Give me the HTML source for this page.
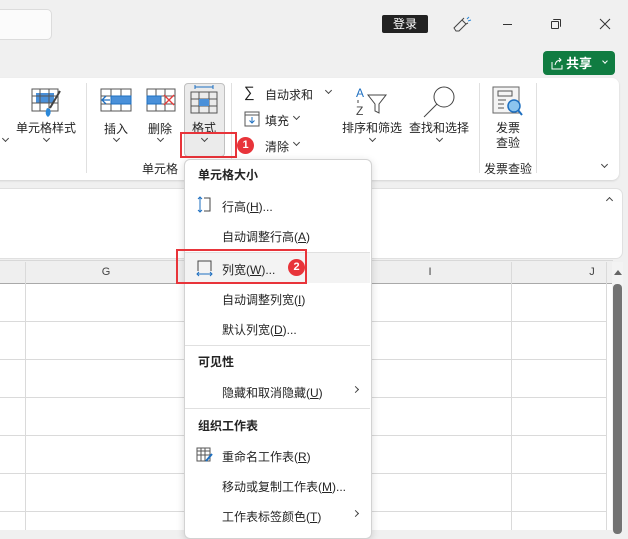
<!DOCTYPE html>
<html><head><meta charset="utf-8"><style>
*{margin:0;padding:0;box-sizing:border-box}
body{width:628px;height:530px;overflow:hidden;background:#f0f0f0;font-family:"Liberation Sans","Noto Sans CJK SC",sans-serif;font-size:12px;color:#242424;position:relative}
.a{position:absolute}
.t{position:absolute;white-space:nowrap}
.c{transform:translateX(-50%)}
.chev{position:absolute;width:5px;height:5px;border-right:1px solid #444;border-bottom:1px solid #444;transform:rotate(45deg)}
.vs{position:absolute;width:1px;background:#e0e0e0}
.mi{position:absolute;left:222px;white-space:nowrap;font-size:12px;color:#242424}
.mh{position:absolute;left:198px;font-weight:bold;font-size:12px;color:#242424}
.sep{position:absolute;left:185px;width:185px;height:1px;background:#e0e0e0}
u{text-decoration:underline}
</style></head><body>
<!-- search box -->
<div class="a" style="left:-10px;top:9px;width:62px;height:31px;background:#fbfbfb;border:1px solid #dcdcdc;border-radius:5px"></div>
<!-- title controls -->
<div class="a" style="left:382px;top:15px;width:46px;height:18px;background:#222;border-radius:2px;color:#fff;font-size:12px;text-align:center;line-height:18px">登录</div>
<svg class="a" style="left:452px;top:16px" width="22" height="18" viewBox="0 0 22 18"><path d="M4 15 L2 12 L10 4 L14 8 L7 15 Z M10 4 L12 2 M14 8 L16 7" fill="none" stroke="#444" stroke-width="1"/><path d="M15 3 L17 1 M16 5 L19 4" stroke="#2b88d8" stroke-width="1"/></svg>
<div class="a" style="left:503px;top:24px;width:9px;height:1px;background:#333"></div>
<div class="a" style="left:551px;top:21px;width:8px;height:8px;border:1px solid #333;border-radius:1px"></div>
<div class="a" style="left:553px;top:19px;width:8px;height:8px;border-top:1px solid #333;border-right:1px solid #333;border-radius:1px"></div>
<svg class="a" style="left:599px;top:18px" width="12" height="12"><path d="M1 1L11 11M11 1L1 11" stroke="#333" stroke-width="1"/></svg>
<!-- share -->
<div class="a" style="left:543px;top:51px;width:72px;height:24px;background:#107c41;border-radius:4px;color:#fff"></div>
<svg class="a" style="left:550px;top:56px" width="14" height="14"><path d="M2 6 V13 H12 V9 M5 9 Q6 4 11 4 M9 2 L11 4 L9 6" fill="none" stroke="#fff" stroke-width="1"/></svg>
<div class="t" style="left:566px;top:53px;color:#fff;font-size:13px;font-weight:bold">共享</div>
<div class="chev" style="left:603px;top:59px;border-color:#fff;width:4px;height:4px"></div>
<!-- ribbon panel -->
<div class="a" style="left:-8px;top:78px;width:627px;height:102px;background:#fff;border-radius:7px;box-shadow:0 1px 2px rgba(0,0,0,.12)"></div>
<div class="vs" style="left:86px;top:83px;height:90px"></div>
<div class="vs" style="left:231px;top:83px;height:90px"></div>
<div class="vs" style="left:479px;top:83px;height:90px"></div>
<div class="vs" style="left:536px;top:83px;height:90px"></div>
<div class="chev" style="left:3px;top:136px"></div>
<!-- cell style icon -->
<svg class="a" style="left:30px;top:86px" width="34" height="34"><rect x="2" y="3" width="26" height="22" fill="none" stroke="#555"/><rect x="6" y="7" width="18" height="10" fill="#4a90d9"/><path d="M2 10H28M2 17H28M10 3V25M19 3V25" stroke="#555"/><path d="M30 5 L20 22" stroke="#444" stroke-width="2"/><path d="M17 22 Q14 28 18 31 Q22 28 20 23Z" fill="#2b88d8"/></svg>
<div class="t c" style="left:46px;top:119px">单元格样式</div>
<div class="chev" style="left:44px;top:136px"></div>
<!-- insert -->
<svg class="a" style="left:100px;top:88px" width="32" height="24"><rect x="1" y="1" width="30" height="22" fill="none" stroke="#555"/><path d="M1 8H31M1 16H31M11 1V23M21 1V23" stroke="#555"/><rect x="11" y="8" width="20" height="8" fill="#4a90d9" stroke="#1e6fc0"/><path d="M10 12H2 M6 8 L2 12 L6 16" stroke="#1e6fc0" fill="none" stroke-width="1.3"/></svg>
<div class="t c" style="left:116px;top:120px">插入</div>
<div class="chev" style="left:114px;top:136px"></div>
<!-- delete -->
<svg class="a" style="left:146px;top:88px" width="30" height="24"><rect x="1" y="1" width="28" height="22" fill="none" stroke="#555"/><path d="M1 8H29M1 16H29M10 1V23M19 1V23" stroke="#555"/><rect x="1" y="8" width="14" height="8" fill="#4a90d9" stroke="#1e6fc0"/><path d="M18 7L28 17M28 7L18 17" stroke="#e83a3a" stroke-width="1.3"/></svg>
<div class="t c" style="left:160px;top:120px">删除</div>
<div class="chev" style="left:158px;top:136px"></div>
<!-- format button -->
<div class="a" style="left:184px;top:83px;width:41px;height:74px;background:#ebebeb;border:1px solid #c0c0c0;border-radius:4px"></div>
<svg class="a" style="left:189px;top:84px" width="30" height="30"><path d="M6 3H24M6 1V5M24 1V5" stroke="#1e6fc0"/><rect x="2" y="8" width="26" height="21" fill="none" stroke="#555"/><path d="M2 15H28M2 22H28M10 8V29M20 8V29" stroke="#555"/><rect x="10" y="15" width="10" height="7" fill="#4a90d9"/></svg>
<div class="t c" style="left:204px;top:119px">格式</div>
<div class="chev" style="left:202px;top:136px"></div>
<div class="a" style="left:180px;top:132px;width:57px;height:26px;border:2px solid #e8343a"></div>
<div class="a" style="left:237px;top:137px;width:17px;height:17px;border-radius:50%;background:#e8343a;color:#fff;font-size:11px;font-weight:bold;text-align:center;line-height:17px">1</div>
<div class="t c" style="left:160px;top:160px">单元格</div>
<!-- editing -->
<div class="t" style="left:244px;top:84px;font-size:15px">∑</div>
<div class="t" style="left:265px;top:86px">自动求和</div>
<div class="chev" style="left:326px;top:88px"></div>
<svg class="a" style="left:244px;top:111px" width="16" height="16"><rect x="1" y="1" width="14" height="14" fill="none" stroke="#555"/><path d="M1 4H15" stroke="#555"/><path d="M8 6V12M5.5 9.5L8 12L10.5 9.5" stroke="#1e6fc0" fill="none"/></svg>
<div class="t" style="left:265px;top:112px">填充</div>
<div class="chev" style="left:294px;top:114px"></div>
<div class="t" style="left:265px;top:138px">清除</div>
<div class="chev" style="left:294px;top:140px"></div>
<svg class="a" style="left:352px;top:86px" width="40" height="32"><text x="4" y="11" font-size="12" fill="#1e6fc0" font-family="Liberation Sans">A</text><text x="4" y="29" font-size="12" fill="#444" font-family="Liberation Sans">Z</text><path d="M6 14V17" stroke="#444"/><path d="M16 9H34L27 18V27L23 25V18Z" fill="none" stroke="#444"/></svg>
<div class="t c" style="left:372px;top:119px">排序和筛选</div>
<div class="chev" style="left:370px;top:136px"></div>
<svg class="a" style="left:420px;top:84px" width="40" height="36"><circle cx="24" cy="13" r="10" fill="none" stroke="#444"/><path d="M17 20L4 33" stroke="#444"/></svg>
<div class="t c" style="left:439px;top:119px">查找和选择</div>
<div class="chev" style="left:437px;top:136px"></div>
<svg class="a" style="left:492px;top:86px" width="34" height="32"><rect x="1" y="1" width="26" height="26" fill="#f4f4f4" stroke="#666"/><rect x="6" y="5" width="14" height="5" fill="none" stroke="#555"/><path d="M6 14H14M6 18H12M6 22H12" stroke="#555"/><circle cx="22" cy="20" r="6" fill="#8cc4ee" stroke="#1e6fc0" stroke-width="1.5"/><path d="M26 24L30 29" stroke="#1e6fc0" stroke-width="2"/></svg>
<div class="t c" style="left:508px;top:119px">发票</div>
<div class="t c" style="left:508px;top:134px">查验</div>
<div class="t c" style="left:508px;top:160px">发票查验</div>
<div class="chev" style="left:602px;top:162px"></div>
<!-- formula panel -->
<div class="a" style="left:-8px;top:188px;width:631px;height:71px;background:#fff;border-radius:7px;border:1px solid #e0e0e0"></div>
<div class="chev" style="left:607px;top:198px;transform:rotate(225deg)"></div>
<!-- grid -->
<div class="a" style="left:0;top:260px;width:613px;height:24px;background:#efefef;border-top:1px solid #d8d8d8;border-bottom:1px solid #a9a9a9"></div>
<div class="a" style="left:0;top:284px;width:613px;height:246px;background:#fff"></div>
<div class="vs" style="left:25px;top:262px;height:268px;background:#dadada"></div>
<div class="vs" style="left:511px;top:262px;height:268px;background:#dadada"></div>
<div class="vs" style="left:606px;top:262px;height:268px;background:#dadada"></div>
<div class="a" style="left:0;top:321px;width:606px;height:1px;background:#dadada"></div>
<div class="a" style="left:0;top:359px;width:606px;height:1px;background:#dadada"></div>
<div class="a" style="left:0;top:397px;width:606px;height:1px;background:#dadada"></div>
<div class="a" style="left:0;top:435px;width:606px;height:1px;background:#dadada"></div>
<div class="a" style="left:0;top:473px;width:606px;height:1px;background:#dadada"></div>
<div class="a" style="left:0;top:511px;width:606px;height:1px;background:#dadada"></div>
<div class="t c" style="left:106px;top:266px;font-size:11px;color:#444">G</div>
<div class="t c" style="left:430px;top:266px;font-size:11px;color:#444">I</div>
<div class="t c" style="left:592px;top:266px;font-size:11px;color:#444">J</div>
<div class="a" style="left:612px;top:262px;width:11px;height:268px;background:#f3f3f3"></div>
<div class="a" style="left:614px;top:270px;width:0;height:0;border-left:4px solid transparent;border-right:4px solid transparent;border-bottom:5px solid #666"></div>
<div class="a" style="left:613px;top:284px;width:9px;height:250px;background:#737373;border-radius:4px"></div>
<!-- menu -->
<div class="a" style="left:184px;top:159px;width:188px;height:380px;background:#fff;border:1px solid #d2d2d2;border-radius:6px;box-shadow:0 2px 8px rgba(0,0,0,.15)"></div>
<div class="mh" style="top:166px">单元格大小</div>
<svg class="a" style="left:196px;top:196px" width="18" height="18"><path d="M4 1V16M2 3L4 1L6 3M2 14L4 16L6 14" stroke="#1e6fc0" fill="none"/><path d="M8 2H14V15H8" stroke="#444" fill="none"/></svg>
<div class="mi" style="top:198px">行高(<u>H</u>)...</div>
<div class="mi" style="top:228px">自动调整行高(<u>A</u>)</div>
<div class="sep" style="top:252px"></div>
<div class="a" style="left:185px;top:253px;width:185px;height:30px;background:#f3f3f3"></div>
<svg class="a" style="left:196px;top:259px" width="18" height="18"><path d="M2 12V2H15V12" stroke="#444" fill="none"/><path d="M1 15H16M3 13L1 15L3 17M14 13L16 15L14 17" stroke="#1e6fc0" fill="none"/></svg>
<div class="mi" style="top:261px">列宽(<u>W</u>)...</div>
<div class="a" style="left:176px;top:249px;width:131px;height:35px;border:2px solid #e8343a"></div>
<div class="a" style="left:288px;top:259px;width:17px;height:17px;border-radius:50%;background:#e8343a;color:#fff;font-size:11px;font-weight:bold;text-align:center;line-height:17px">2</div>
<div class="mi" style="top:291px">自动调整列宽(<u>I</u>)</div>
<div class="mi" style="top:321px">默认列宽(<u>D</u>)...</div>
<div class="sep" style="top:345px"></div>
<div class="mh" style="top:353px">可见性</div>
<div class="mi" style="top:384px">隐藏和取消隐藏(<u>U</u>)</div>
<div class="chev" style="left:353px;top:387px;transform:rotate(-45deg)"></div>
<div class="sep" style="top:408px"></div>
<div class="mh" style="top:417px">组织工作表</div>
<svg class="a" style="left:196px;top:446px" width="18" height="18"><rect x="1" y="2" width="13" height="13" fill="none" stroke="#555"/><path d="M1 5H14M1 9H14M5 2V15M9 2V15" stroke="#555"/><path d="M10 15L16 8" stroke="#1e6fc0" stroke-width="2"/></svg>
<div class="mi" style="top:448px">重命名工作表(<u>R</u>)</div>
<div class="mi" style="top:478px">移动或复制工作表(<u>M</u>)...</div>
<div class="mi" style="top:508px">工作表标签颜色(<u>T</u>)</div>
<div class="chev" style="left:353px;top:511px;transform:rotate(-45deg)"></div>
</body></html>
